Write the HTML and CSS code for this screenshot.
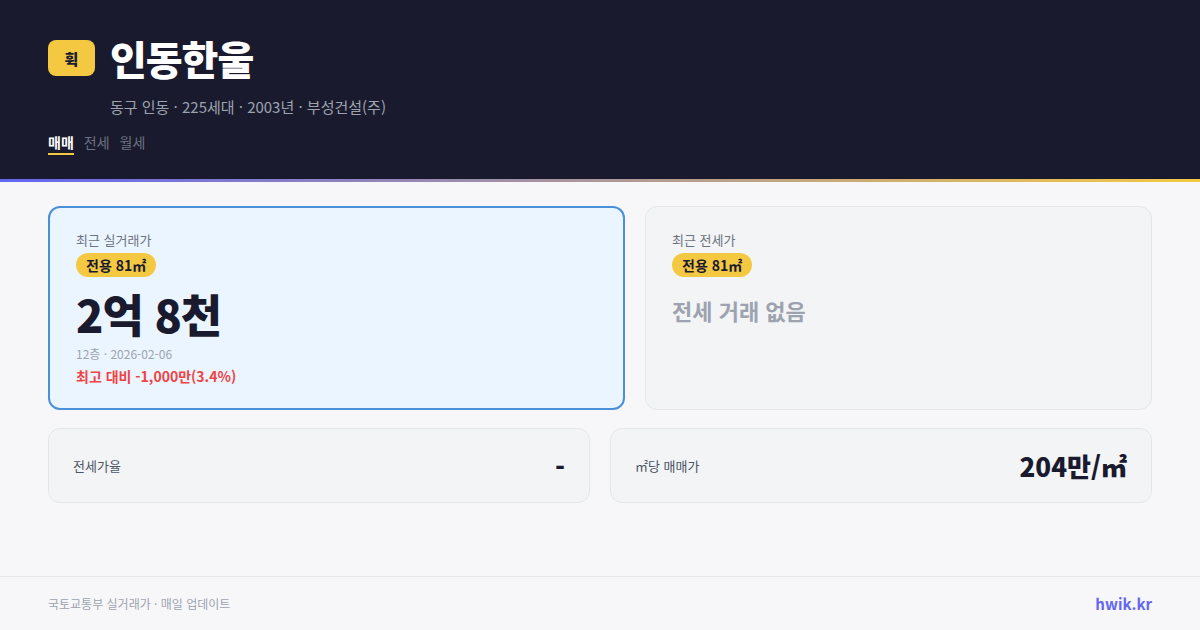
FILE: index.html
```html
<!DOCTYPE html>
<html lang="ko">
<head>
<meta charset="utf-8">
<link rel="stylesheet" href="styles.css">
</head>
<body>
<div class="page">
  <header class="header">
    <div class="title-row">
      <div class="logo">휙</div>
      <h1 class="title">인동한울</h1>
    </div>
    <div class="subtitle">동구 인동 · 225세대 · 2003년 · 부성건설(주)</div>
    <nav class="tabs">
      <span class="tab active">매매</span>
      <span class="tab">전세</span>
      <span class="tab">월세</span>
    </nav>
  </header>
  <div class="accent"></div>
  <main class="main">
    <div class="row-top">
      <section class="card card-primary">
        <div class="label">최근 실거래가</div>
        <span class="badge">전용 81㎡</span>
        <div class="price">2억 8천</div>
        <div class="meta">12층 · 2026-02-06</div>
        <div class="diff">최고 대비 -1,000만(3.4%)</div>
      </section>
      <section class="card card-muted">
        <div class="label">최근 전세가</div>
        <span class="badge">전용 81㎡</span>
        <div class="empty">전세 거래 없음</div>
      </section>
    </div>
    <div class="row-bottom">
      <div class="stat">
        <span class="stat-label">전세가율</span>
        <span class="stat-value">-</span>
      </div>
      <div class="stat">
        <span class="stat-label">㎡당 매매가</span>
        <span class="stat-value">204만/㎡</span>
      </div>
    </div>
  </main>
  <footer class="footer">
    <span class="source">국토교통부 실거래가 · 매일 업데이트</span>
    <span class="brand">hwik.kr</span>
  </footer>
</div>
</body>
</html>
```

FILE: styles.css
```css
* { box-sizing: border-box; margin: 0; padding: 0; }
html, body { width: 1200px; height: 630px; overflow: hidden; }
body {
  font-family: "Noto Sans CJK KR", "Noto Sans", sans-serif;
  background: #f7f7fa;
  color: #1a1a2e;
}
.page { display: flex; flex-direction: column; height: 630px; }
.header {
  background: #1a1a2e;
  height: 179px;
  padding: 34px 48px 0;
}
.title-row { display: flex; align-items: center; gap: 15px; }
.logo {
  width: 47px; height: 36px;
  background: #f5c842;
  border-radius: 8px;
  display: flex; align-items: center; justify-content: center;
  font-weight: 800; font-size: 15px; color: #1a1a2e;
}
.title {
  font-size: 40px; font-weight: 900; color: #ffffff;
  line-height: 48px; letter-spacing: -1px;
}
.subtitle {
  margin-top: 14px;
  padding-left: 62px;
  font-size: 15px; color: #9ca3af; line-height: 22px;
}
.tabs { display: flex; gap: 10px; margin-top: 14px; }
.tab { font-size: 14px; color: #6b7280; line-height: 20px; padding-bottom: 1px; }
.tab.active { color: #ffffff; font-weight: 700; border-bottom: 2px solid #f5c842; }
.accent { height: 3px; background: linear-gradient(90deg, #6366f1, #f5c842); }
.main { padding: 24px 48px 0; flex: 1; }
.row-top { display: grid; grid-template-columns: 577px 1fr; gap: 20px; }
.card {
  height: 204px;
  border-radius: 12px;
  padding: 23px 26px;
  display: flex; flex-direction: column; align-items: flex-start;
}
.card-primary { background: #ebf5ff; border: 2px solid #4a90d9; }
.card-muted { background: #f3f4f6; border: 1px solid #e5e7eb; padding: 24px 26px; }
.label { font-size: 13px; color: #6b7280; line-height: 18px; }
.badge {
  margin-top: 4px;
  background: #f5c842; color: #1a1a2e;
  font-size: 14px; font-weight: 700;
  border-radius: 12px; padding: 0 10px;
  line-height: 24px; height: 24px;
}
.price {
  margin-top: 6px;
  font-size: 45px; font-weight: 800; line-height: 62px; letter-spacing: -1px;
  color: #1a1a2e;
}
.meta { font-size: 12px; color: #9ca3af; line-height: 18px; margin-top: 0; }
.diff { font-size: 14px; color: #ef4444; font-weight: 700; line-height: 20px; margin-top: 3px; }
.empty { margin-top: 18px; font-size: 22px; font-weight: 700; color: #9ca3af; line-height: 30px; }
.row-bottom { display: grid; grid-template-columns: 1fr 1fr; gap: 20px; margin-top: 18px; }
.stat {
  height: 75px;
  background: #f3f4f6; border: 1px solid #e5e7eb; border-radius: 12px;
  padding: 0 24px;
  display: flex; align-items: center; justify-content: space-between;
}
.stat-label { font-size: 13px; color: #4b5563; }
.stat-value { font-size: 26px; font-weight: 800; color: #1a1a2e; }
.footer {
  height: 54px;
  border-top: 1px solid #e5e7eb;
  padding: 0 48px;
  display: flex; align-items: center; justify-content: space-between;
}
.source { font-size: 12px; color: #9ca3af; }
.brand { font-size: 15px; font-weight: 700; color: #6366f1; }
```
